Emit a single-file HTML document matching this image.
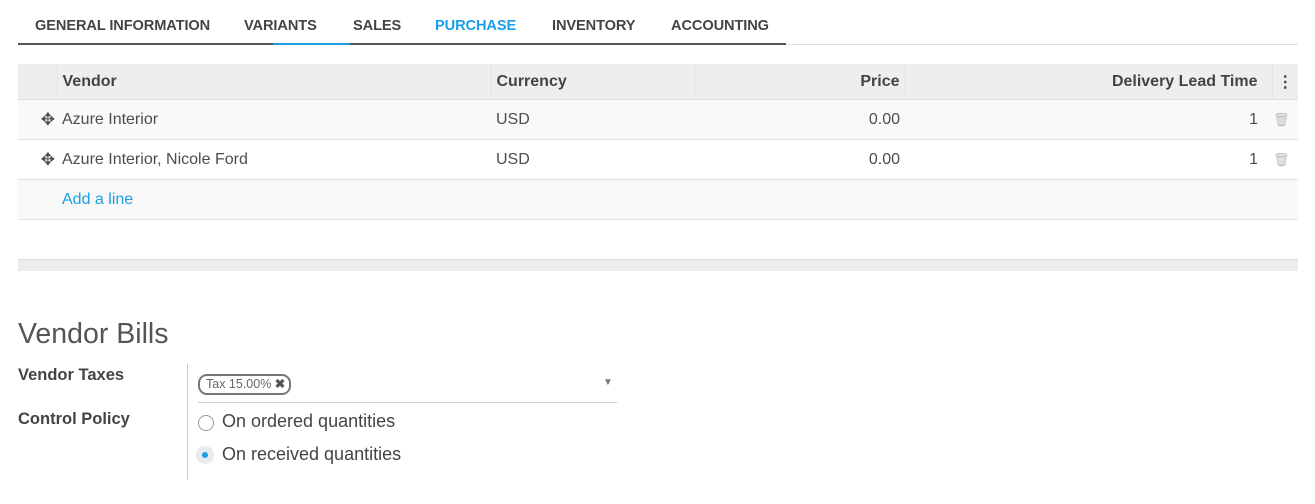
<!DOCTYPE html>
<html><head><style>
body{margin:0;background:#fff;font-family:"Liberation Sans",sans-serif;color:#4c4c4c;width:1315px;height:504px;overflow:hidden;position:relative}
.a{position:absolute}
.tab{position:absolute;top:18px;font-size:14.6px;font-weight:bold;color:#444;letter-spacing:-0.1px}
table{border-collapse:collapse;position:absolute;left:18px;top:64px;width:1280px;font-size:16px;table-layout:fixed}
td,th{padding:0 5px;height:39px;border-bottom:1px solid #e0e0e0;white-space:nowrap;overflow:visible}
th{background:#eee;height:35px;text-align:left;font-weight:bold;color:#444;border-left:1px solid #e2e2e2}
th:first-child{border-left:none}
.r{text-align:right}
</style></head><body>
<div class="tab" style="left:35px">GENERAL INFORMATION</div>
<div class="tab" style="left:244px">VARIANTS</div>
<div class="tab" style="left:353px">SALES</div>
<div class="tab" style="left:435px;color:#1a9fe8">PURCHASE</div>
<div class="tab" style="left:552px">INVENTORY</div>
<div class="tab" style="left:671px">ACCOUNTING</div>
<div class="a" style="left:18px;top:44px;width:1280px;height:1px;background:#ddd"></div>
<div class="a" style="left:18px;top:43px;width:768px;height:2px;background:#555"></div>
<div class="a" style="left:273px;top:43px;width:77px;height:2px;background:#1a9fe8;z-index:2"></div>
<table>
<colgroup><col style="width:39px"><col style="width:434px"><col style="width:203px"><col style="width:211px"><col style="width:367px"><col style="width:26px"></colgroup>
<tr><th></th><th>Vendor</th><th>Currency</th><th style="text-align:right">Price</th><th style="text-align:right;padding-right:14px">Delivery Lead Time</th><th style="text-align:center;padding:0">⋮</th></tr>
<tr style="background:#f9f9f9"><td style="font-size:17px;text-align:right;padding-right:2px">✥</td><td>Azure Interior</td><td>USD</td><td class="r">0.00</td><td class="r" style="padding-right:14px">1</td><td style="color:#bbb;font-size:13px;padding:0 0 0 1px">🗑</td></tr>
<tr><td style="font-size:17px;text-align:right;padding-right:2px">✥</td><td>Azure Interior, Nicole Ford</td><td>USD</td><td class="r">0.00</td><td class="r" style="padding-right:14px">1</td><td style="color:#bbb;font-size:13px;padding:0 0 0 1px">🗑</td></tr>
<tr style="background:#f8f8f8"><td></td><td style="color:#1a9fe8">Add a line</td><td></td><td></td><td></td><td></td></tr>
<tr><td></td><td></td><td></td><td></td><td></td><td></td></tr>
</table>
<div class="a" style="left:18px;top:259px;width:1280px;height:11px;background:#ececec;border-top:1px solid #ddd"></div>
<div class="a" style="left:18px;top:318px;font-size:28.5px;color:#555">Vendor Bills</div>
<div class="a" style="left:18px;top:366px;font-size:16.5px;font-weight:bold;color:#444">Vendor Taxes</div>
<div class="a" style="left:18px;top:410px;font-size:16.5px;font-weight:bold;color:#444">Control Policy</div>
<div class="a" style="left:187px;top:364px;width:1px;height:116px;background:#ccc"></div>
<div class="a" style="left:198px;top:374px;height:17px;padding:0 4px 0 6px;border:2px solid #777;border-radius:9px;font-size:12.5px;line-height:17px;color:#666">Tax 15.00% <b style="color:#555">✖</b></div>
<div class="a" style="left:603px;top:377px;font-size:10px;color:#777">▼</div>
<div class="a" style="left:198px;top:402px;width:419px;height:1px;background:#ccc"></div>
<div class="a" style="left:198px;top:415px;width:16px;height:16px;border:1px solid #999;border-radius:50%;box-sizing:border-box"></div>
<div class="a" style="left:222px;top:411px;font-size:18px;color:#444">On ordered quantities</div>
<div class="a" style="left:196px;top:446px;width:18px;height:18px;border-radius:50%;background:#e8ecef"></div>
<div class="a" style="left:202px;top:452px;width:6px;height:6px;border-radius:50%;background:#1a9fe8"></div>
<div class="a" style="left:222px;top:444px;font-size:18px;color:#444">On received quantities</div>
</body></html>
